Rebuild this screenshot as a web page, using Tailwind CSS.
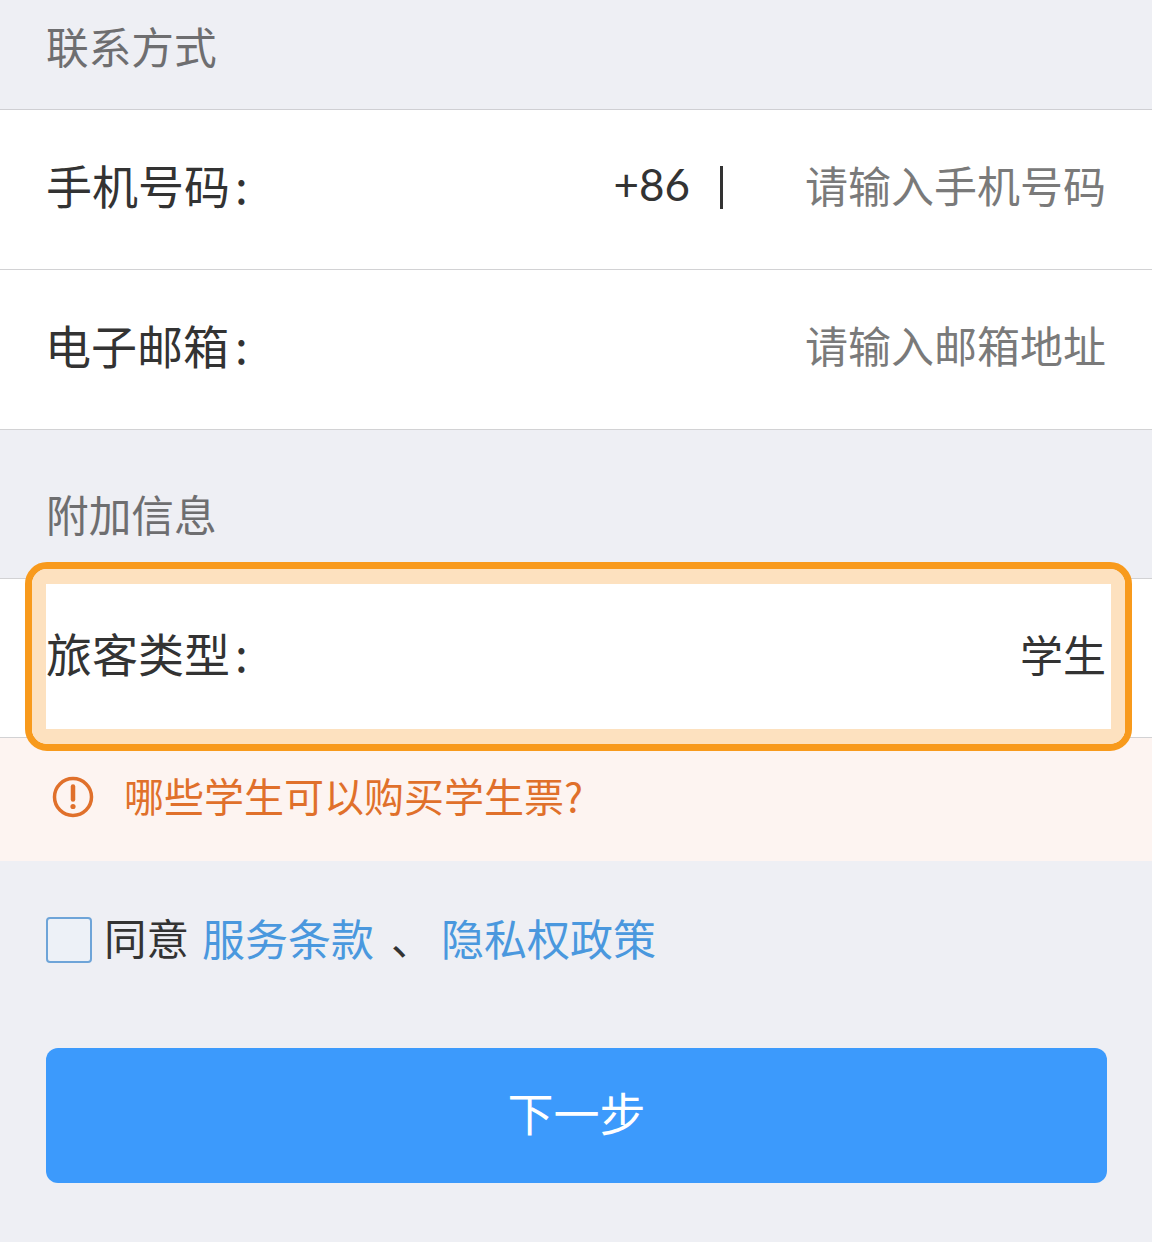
<!DOCTYPE html>
<html lang="zh">
<head>
  <meta charset="UTF-8" />
  <meta name="viewport" content="width=device-width, initial-scale=1.0" />
  <title>联系方式</title>
  <script src="https://cdn.jsdelivr.net/npm/@tailwindcss/browser@4"></script>
</head>
<body class="bg-[#eeeff4] font-['Noto_Sans_CJK_SC','Noto_Sans',sans-serif]">
  <div class="relative w-[1152px] h-[1242px] overflow-hidden">

    <div class="h-[110px] border-b border-[#cfcfd3] pl-[46px] pt-[16px] text-[42.7px] leading-[58px] text-[#6e6e70]">联系方式</div>

    <div class="h-[160px] bg-white border-b border-[#d2d2d4] flex items-center justify-between pl-[46px] pr-[46px]">
      <span class="mb-[12px] text-[46px] leading-none text-[#333]">手机号码<span class="ml-[5px]">:</span></span>
      <div class="flex items-center">
        <span class="mb-[12px] text-[44px] leading-none text-[#333] font-['Lato',sans-serif]">+86</span>
        <span class="mb-[5px] w-[3px] h-[43px] bg-[#333] ml-[30px] mr-[82px]"></span>
        <span class="mb-[10px] text-[43px] leading-none text-[#7a7a7a]">请输入手机号码</span>
      </div>
    </div>

    <div class="h-[160px] bg-white border-b border-[#d2d2d4] flex items-center justify-between pl-[45px] pr-[46px]">
      <span class="mb-[12px] text-[46px] leading-none text-[#333]">电子邮箱<span class="ml-[6px]">:</span></span>
      <span class="mb-[10px] text-[43px] leading-none text-[#7a7a7a]">请输入邮箱地址</span>
    </div>

    <div class="h-[149px] border-b border-[#d2d2d4] pl-[46px] pt-[54px] text-[42.7px] leading-[58px] text-[#6e6e70]">附加信息</div>

    <div class="h-[159px] bg-white border-b border-[#d2d2d4] flex items-center justify-between pl-[46px] pr-[46px]">
      <span class="mb-[12px] text-[46px] leading-none text-[#333]">旅客类型<span class="ml-[5px]">:</span></span>
      <span class="mb-[10px] text-[43px] leading-none text-[#333]">学生</span>
    </div>

    <div class="h-[123px] bg-[#fdf4f1] flex items-center pl-[52px] text-[#e0702b]">
      <svg class="mb-[5px] w-[42px] h-[42px] shrink-0" viewBox="0 0 42 42" fill="none">
        <circle cx="21" cy="21" r="18.5" stroke="#e0702b" stroke-width="3.5" />
        <path d="M21 10.5v13" stroke="#e0702b" stroke-width="4.5" stroke-linecap="round" />
        <circle cx="21" cy="30.5" r="2.6" fill="#e0702b" />
      </svg>
      <span class="mb-[9px] ml-[30px] text-[40px] leading-none">哪些学生可以购买学生票?</span>
    </div>

    <div class="flex items-center pl-[46px] mt-[55px] h-[48px]">
      <span class="w-[46px] h-[46px] rounded-[4px] border-2 border-[#6ea4d8] bg-[#edf1f7] shrink-0"></span>
      <span class="mb-[6px] ml-[12px] text-[42.5px] leading-none text-[#333]">同意</span>
      <span class="mb-[6px] ml-[13px] text-[43px] leading-none text-[#4a98de]">服务条款</span>
      <span class="mb-[6px] ml-[17px] text-[42px] leading-none text-[#333]">、</span>
      <span class="mb-[6px] ml-[8px] text-[43px] leading-none text-[#4a98de]">隐私权政策</span>
    </div>

    <button class="block ml-[46px] mt-[84px] w-[1061px] h-[135px] pb-[10px] rounded-[12px] bg-[#3c9afc] text-white text-[46px] leading-none">下一步</button>

    <!-- highlight ring over the passenger type row -->
    <div class="absolute left-[25px] top-[562px] w-[1107px] h-[189px] rounded-[22px] border-[7px] border-[#f89a1c] pointer-events-none">
      <div class="absolute inset-0 rounded-[15px] border-x-[14px] border-t-[15px] border-b-[15px] border-[#fde1bf]"></div>
    </div>
  </div>
</body>
</html>
